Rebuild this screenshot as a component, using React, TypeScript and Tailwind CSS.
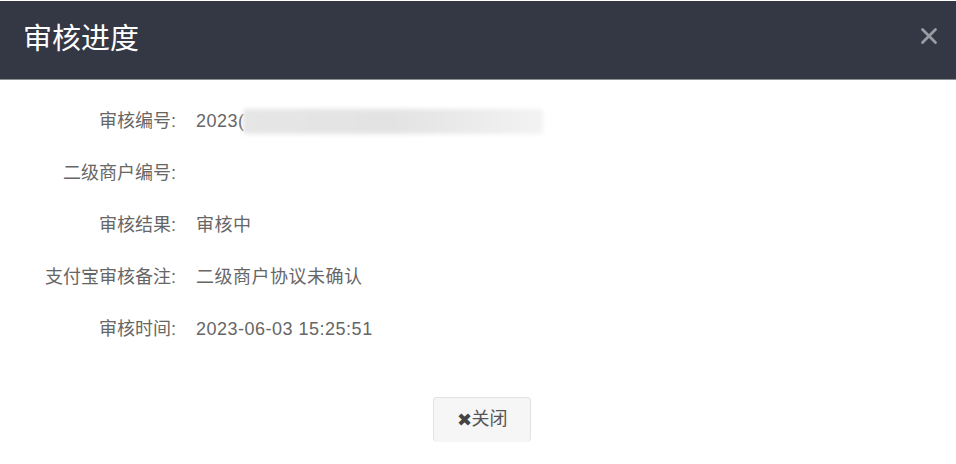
import { X } from "lucide-react";

const rows = [
  { label: "审核编号:", value: "2023(", blur: true },
  { label: "二级商户编号:", value: "" },
  { label: "审核结果:", value: "审核中" },
  { label: "支付宝审核备注:", value: "二级商户协议未确认" },
  { label: "审核时间:", value: "2023-06-03 15:25:51" },
];

export default function App() {
  return (
    <div
      className="w-[956px] h-[464px] bg-white overflow-hidden"
      style={{ fontFamily: '"Liberation Sans", "Noto Sans CJK SC", sans-serif' }}
    >
      {/* Header */}
      <div className="mt-px h-[79px] bg-[#343744] border-b border-[#8c8e94] flex items-center justify-between pl-[23px] pr-[14px]">
        <h1 className="text-[29px] text-white">审核进度</h1>
        <X className="w-[26px] h-[26px] mb-[8px] text-[#9a9ca3]" strokeWidth={2.6} />
      </div>

      {/* Body */}
      <div className="pt-[15px] flex flex-col">
        {rows.map((row) => (
          <div key={row.label} className="h-[52px] flex items-center text-[18px] text-[#666]">
            <div className="w-[176px] text-right">{row.label}</div>
            <div className="pl-[20px] flex items-center tracking-[0.5px]">
              {row.value}
              {row.blur && (
                <div className="ml-[-2px] w-[300px] h-[25px] rounded-sm bg-gradient-to-r from-[#e6e6e6] via-[#e3e3e3] to-[#f3f3f3] blur-[2px]" />
              )}
            </div>
          </div>
        ))}
      </div>

      {/* Footer */}
      <div className="mt-[42px] flex justify-center">
        <button className="ml-[8px] w-[98px] h-[45px] bg-[#f6f6f6] border border-[#e2e2e2] border-b-transparent rounded-sm flex items-center justify-center text-[18px] text-[#555]">
          <span className="text-[#444] text-[18px] leading-none">✖</span>关闭
        </button>
      </div>
    </div>
  );
}
